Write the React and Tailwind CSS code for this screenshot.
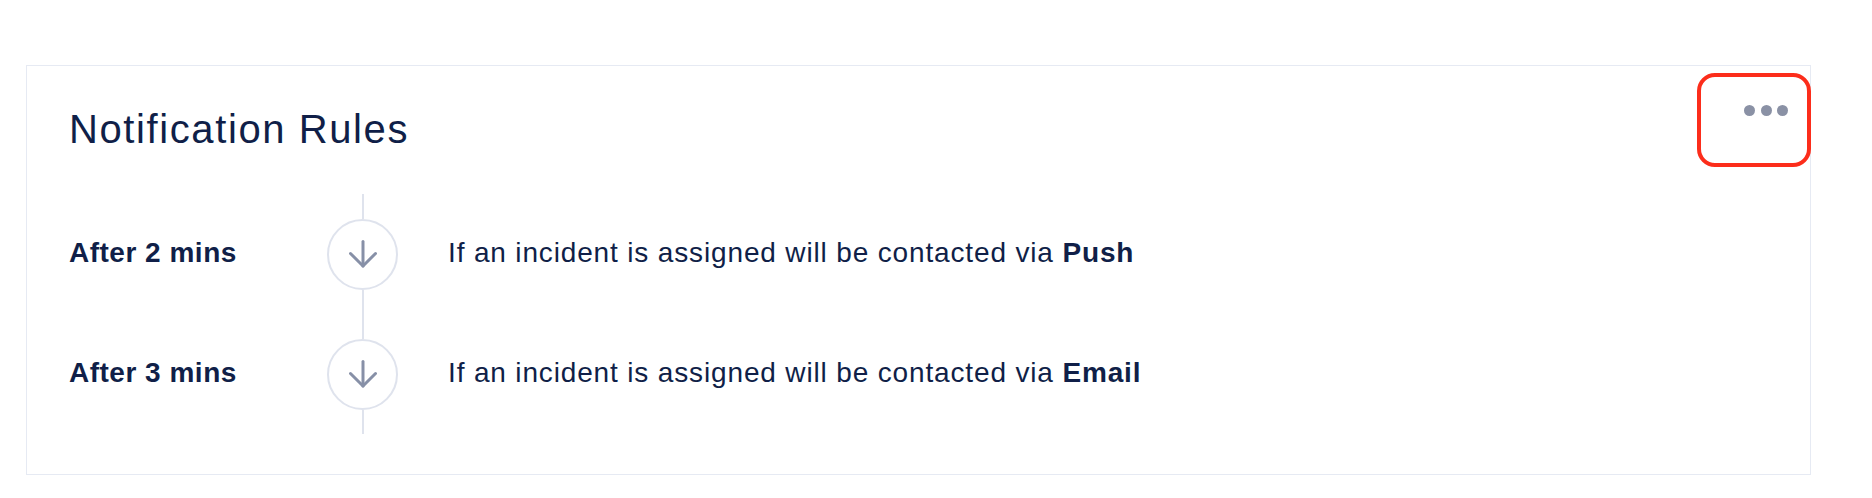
import React from "react";

const rules = [
  { delay: "After 2 mins", channel: "Push" },
  { delay: "After 3 mins", channel: "Email" },
];

function ArrowDown() {
  return (
    <svg width="28" height="28" viewBox="0 0 28 28" fill="none" stroke="#8790a7" strokeWidth="3" strokeLinecap="round" strokeLinejoin="round">
      <line x1="14" y1="1.5" x2="14" y2="26" />
      <polyline points="1.5,13.5 14,26 26.5,13.5" />
    </svg>
  );
}

export default function App() {
  return (
    <div className="min-h-[498px] bg-white pt-[65px] pl-[26px]" style={{ fontFamily: '"Liberation Sans", Arial, sans-serif' }}>
      <div className="relative w-[1785px] border border-[#e6eaf3] pt-[39px] pb-[40px] pl-[42px] pr-[22px] text-[#101f48]">
        <div className="flex items-start justify-between">
          <h2 className="text-[40px] leading-[48px] font-normal tracking-[1.6px]">Notification Rules</h2>
          <div className="flex gap-[5.5px]">
            <span className="block w-[11px] h-[11px] rounded-full bg-[#8a91a5]" />
            <span className="block w-[11px] h-[11px] rounded-full bg-[#8a91a5]" />
            <span className="block w-[11px] h-[11px] rounded-full bg-[#8a91a5]" />
          </div>
        </div>
        <div className="mt-[41px] flex flex-col">
          {rules.map((r) => (
            <div key={r.delay} className="grid grid-cols-[258px_71px_1fr] h-[120px]">
              <div className="flex items-center pb-[3px] text-[28px] leading-[28px] font-bold tracking-[0.5px]">{r.delay}</div>
              <div className="flex flex-col items-center">
                <div className="flex-1 w-[2px] bg-[#dfe3ed]" />
                <div className="flex items-center justify-center w-[71px] h-[71px] rounded-full border-2 border-[#dfe3ed]">
                  <ArrowDown />
                </div>
                <div className="flex-1 w-[2px] bg-[#dfe3ed]" />
              </div>
              <div className="flex items-center pl-[50px] pb-[3px] text-[28px] leading-[28px] tracking-[0.85px]">
                <span>
                  If an incident is assigned will be contacted via <b className="font-bold">{r.channel}</b>
                </span>
              </div>
            </div>
          ))}
        </div>
        <div className="absolute right-[-1px] top-[7px] w-[114px] h-[94px] rounded-[18px] border-4 border-[#fc2d1b]" />
      </div>
    </div>
  );
}
